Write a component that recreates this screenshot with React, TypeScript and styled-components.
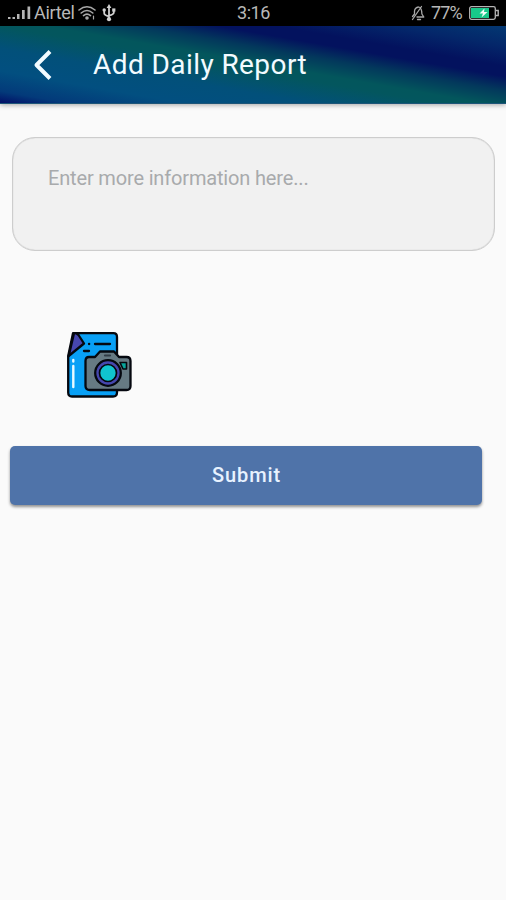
import React from "react";
import styled, { createGlobalStyle } from "styled-components";

const GlobalStyle = createGlobalStyle`
  * { box-sizing: border-box; }
  body { margin: 0; background: #fafafa; font-family: Roboto, "Liberation Sans", sans-serif; }
`;

const Screen = styled.div`
  width: 100%;
  min-height: 900px;
  background: #fafafa;
`;

const StatusBar = styled.div`
  height: 26px;
  padding: 0 7px 0 8px;
  display: grid;
  grid-template-columns: 1fr auto 1fr;
  align-items: center;
  background: #000;
  color: #b8b8b8;
  font-size: 18px;
  line-height: 26px;
`;

const StatusGroup = styled.div<{ $end?: boolean }>`
  display: flex;
  align-items: center;
  justify-content: ${(p) => (p.$end ? "flex-end" : "flex-start")};
  height: 26px;
  svg { flex: none; display: block; }
`;

const StatusText = styled.span<{ $spacing?: number; $left?: number; $right?: number }>`
  letter-spacing: ${(p) => p.$spacing ?? 0}px;
  margin-left: ${(p) => p.$left ?? 0}px;
  margin-right: ${(p) => p.$right ?? 0}px;
`;

const UsbSlot = styled.span`
  margin-left: 6px;
`;

const AppBar = styled.header`
  height: 78px;
  padding: 0 32px;
  display: flex;
  align-items: center;
  color: #f2fbff;
  background: linear-gradient(190deg, #033872 0px, #04276a 20px, #03125e 40px, #03125e 50px, #03385c 64px, #03565c 80px, #03565e 88px, #02507a 110px, #024f80 132px, #033a7a 152px, #020a64 165px);
  border-bottom: 1px solid #1d5578;
  box-shadow: 0 1px 5px rgba(0, 0, 0, 0.35);
`;

const BackButton = styled.button`
  width: 22px;
  height: 32px;
  padding: 0;
  border: 0;
  background: none;
  color: inherit;
  svg { display: block; }
`;

const Title = styled.h1`
  margin: 0 0 0 39px;
  font-size: 28px;
  font-weight: 400;
  line-height: 36px;
  letter-spacing: 0.42px;
  white-space: nowrap;
`;

const Form = styled.form`
  display: flex;
  flex-direction: column;
  padding: 33px 11px 0 10px;
`;

const ReportInput = styled.textarea`
  height: 114px;
  margin: 0 0 0 2px;
  padding: 28px 35px;
  resize: none;
  outline: none;
  border: 1.5px solid #cdcdcd;
  border-radius: 23px;
  background: #f1f1f1;
  box-shadow: inset 0 0 1px rgba(0, 0, 0, 0.25);
  color: #333;
  font: 400 20px/24px Roboto, sans-serif;
  letter-spacing: -0.16px;
  &::placeholder { color: #a8aaac; opacity: 1; }
`;

const PhotoButton = styled.button`
  align-self: flex-start;
  width: 66px;
  height: 68px;
  margin: 80px 0 0 56px;
  padding: 0;
  border: 0;
  background: none;
  svg { display: block; }
`;

const SubmitButton = styled.button`
  height: 59px;
  margin: 47px 13px 0 0;
  padding: 0 0 1px 1px;
  border: 0;
  border-radius: 5px;
  background: #4f73a9;
  color: #e8f2ff;
  font: 500 20px/24px Roboto, sans-serif;
  letter-spacing: 0.9px;
  box-shadow: 0 2px 3px rgba(0, 0, 0, 0.42);
`;

const SignalIcon = () => (
  <svg width="23" height="16" viewBox="0 0 23 16" fill="#b4b4b4">
    <path d="M0 12h2.500v2H0zM4.500 12H7v2H4.500zM9 9h2.500v5H9zM14 5h2.700v9H14zM19.500 1.500h2.700V14h-2.700z" />
  </svg>
);

const WifiIcon = () => (
  <svg width="18" height="16" viewBox="0 0 18 16" fill="none" stroke="#a8a8a8" strokeWidth="1.6" strokeLinecap="round">
    <path d="M1 5Q9-1.500 17 5M3.200 8Q9 3 14.800 8M5.500 10.600Q9 7.600 12.500 10.600" />
    <circle cx="9" cy="13" r="1" fill="#a8a8a8" />
    <path d="M15.500 11v3" strokeWidth="1.200" />
  </svg>
);

const UsbIcon = () => (
  <svg width="14" height="18" viewBox="0 0 14 18" fill="none" stroke="#d0d0d0" strokeWidth="1.800">
    <path d="M7 3v12M2.200 6v3.200Q2.200 11 7 12.400M11.800 6v2.600Q11.800 10.500 7 11.700" />
    <path d="M7 0 9.400 4H4.600z" fill="#d0d0d0" stroke="none" />
    <circle cx="2.200" cy="6" r="1.700" fill="#d0d0d0" stroke="none" />
    <path d="M10.200 4.400h3.200v3.200h-3.200z" fill="#d0d0d0" stroke="none" />
    <circle cx="7" cy="15.200" r="2.100" fill="#d0d0d0" stroke="none" />
  </svg>
);

const MutedBellIcon = () => (
  <svg width="14" height="16" viewBox="0 0 14 16" fill="none" stroke="#a8a8a8" strokeWidth="1.300" strokeLinecap="round" strokeLinejoin="round">
    <path d="M1.500 11.500 3.500 9V6Q4 2.500 7.500 2L9 2.500M10 4Q11 6 10.900 9L12.800 12H6M1.500 14.500 10.500 1.500M6.500 14.500h3" />
  </svg>
);

const BatteryIcon = () => (
  <svg width="30" height="14" viewBox="0 0 30 14">
    <rect x=".7" y=".7" width="25.600" height="12.600" rx="1.800" fill="#000" stroke="#b4b4b4" strokeWidth="1.300" />
    <path d="M2 2h18v10H2z" fill="#18c98a" />
    <path d="M27 4.500h2.200v5H27" fill="none" stroke="#b4b4b4" strokeWidth="1.400" />
    <path d="m15.500 2.500-5 5h3.500l-1.500 4 6-5.500h-3.500z" fill="#effff8" />
  </svg>
);

const BackIcon = () => (
  <svg width="22" height="32" viewBox="0 0 22 32" fill="none" stroke="currentColor" strokeWidth="4" strokeLinejoin="round">
    <path d="M18 2.500 4.500 16 18 29.500" />
  </svg>
);

const CameraFileIcon = () => (
  <svg width="66" height="68" viewBox="0 0 66 68" fill="none" stroke="#05080f" strokeWidth="2.300" strokeLinecap="round" strokeLinejoin="round">
    <path d="M7 2.200H47.500Q51 2.200 51 6V61.500Q51 65.500 47 65.500H6Q2.200 65.500 2.200 61.500V25Z" fill="#08a0f6" />
    <path d="M8 2.200 2.700 25 18 12.500 12.500 4Q10.500 1.500 8 2.200Z" fill="#4747b0" />
    <path d="M23 13h.2M29 13H44M18 20h5" />
    <path d="M7.300 29v1.500M7.300 35v21" stroke="#e9faff" strokeWidth="2.400" />
    <path d="M23 26H29L34 20.500H48L53 26H60.500Q64.500 26 64.500 30V55Q64.500 59 60.500 59H24Q19.500 59 19.500 55V30Q19.500 26 23 26Z" fill="#667a83" />
    <path d="M39 24.500h5" stroke="#303c46" strokeWidth="2.200" />
    <path d="M54 31.500h6.500v6.500H57Z" fill="#08a59b" strokeWidth="1.600" />
    <circle cx="42" cy="42" r="12.800" fill="#4647ae" />
    <circle cx="42" cy="42" r="8.500" fill="#10c4cf" strokeWidth="1.700" />
  </svg>
);

export default function App() {
  return (
    <>
      <GlobalStyle />
      <Screen>
        <StatusBar>
          <StatusGroup>
            <SignalIcon />
            <StatusText $left={3} $right={3} $spacing={-0.3}>Airtel</StatusText>
            <WifiIcon />
            <UsbSlot><UsbIcon /></UsbSlot>
          </StatusGroup>
          <StatusText $spacing={-0.4}>3:16</StatusText>
          <StatusGroup $end>
            <MutedBellIcon />
            <StatusText $left={6} $right={7} $spacing={-0.8}>77%</StatusText>
            <BatteryIcon />
          </StatusGroup>
        </StatusBar>
        <AppBar>
          <BackButton type="button" aria-label="Back"><BackIcon /></BackButton>
          <Title>Add Daily Report</Title>
        </AppBar>
        <Form onSubmit={(e) => e.preventDefault()}>
          <ReportInput placeholder="Enter more information here..." />
          <PhotoButton type="button" aria-label="Attach photo"><CameraFileIcon /></PhotoButton>
          <SubmitButton type="submit">Submit</SubmitButton>
        </Form>
      </Screen>
    </>
  );
}
